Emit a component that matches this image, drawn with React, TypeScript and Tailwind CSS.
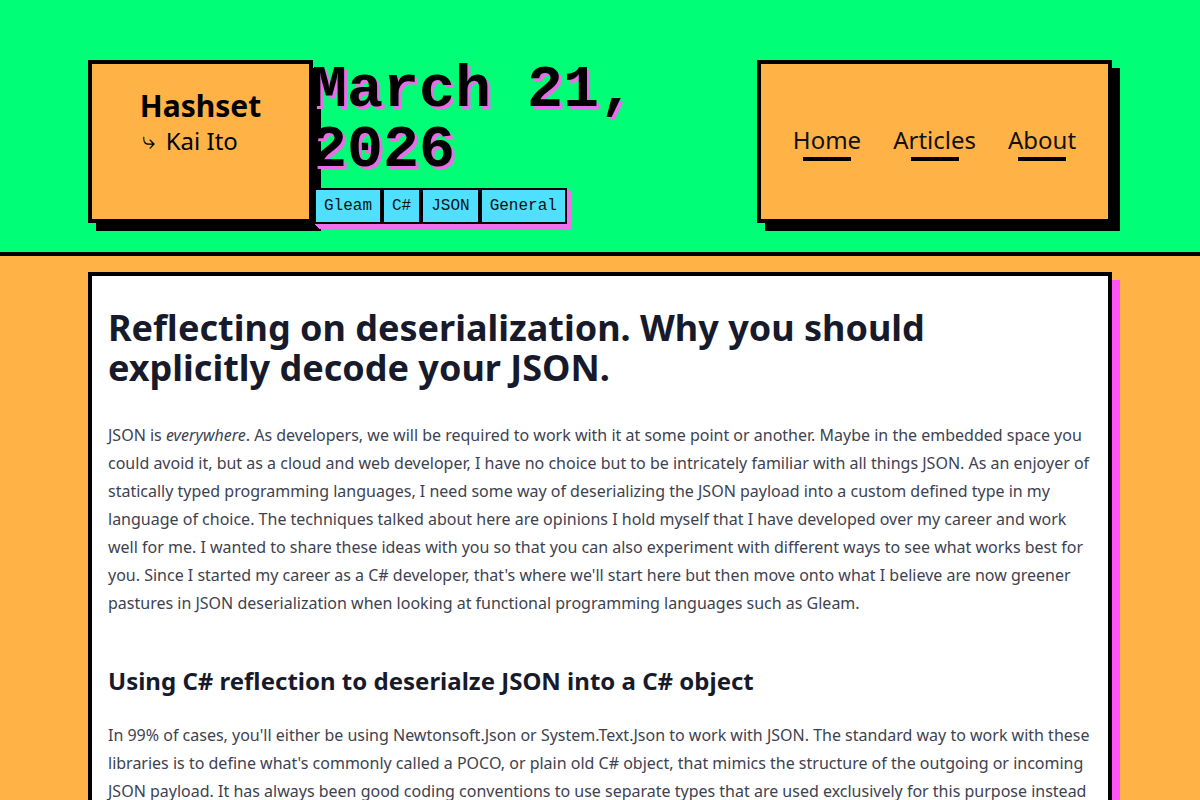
import React from "react";

const tags = ["Gleam", "C#", "JSON", "General"];
const nav = ["Home", "Articles", "About"];

export default function App() {
  return (
    <div className="min-h-screen bg-[#ffb347] font-['Noto_Sans',sans-serif]">
      {/* Header band */}
      <header className="h-[256px] bg-[#00ff77] border-b-4 border-black pt-[60px]">
        <div className="mx-auto w-[1024px] flex items-start">
          {/* Site badge */}
          <div className="w-[225px] h-[163px] shrink-0 bg-[#ffb347] border-4 border-black shadow-[8px_8px_0_#000] flex justify-center pt-[22px]">
            <div className="text-black">
              <div className="text-[30px] font-bold leading-[40px]">Hashset</div>
              <div className="text-[24px] leading-[30px] flex items-center gap-[8px] pl-[2px]">
                <span className="w-[16px] text-[24px] leading-[30px] font-['DejaVu_Sans',sans-serif]">⤷</span>
                <span>Kai Ito</span>
              </div>
            </div>
          </div>

          {/* Post date and tags */}
          <div className="flex-1 flex flex-col">
            <div className="-ml-[2px] font-['Liberation_Mono',monospace] font-bold text-[60px] leading-[60px] text-black [text-shadow:3px_3px_0_#e86de8] relative z-10">
              March 21,
              <br />
              2026
            </div>
            <div className="mt-[8px] flex self-start ml-[1px] shadow-[1px_1px_0_#ee70ee,2px_2px_0_#ee70ee,3px_3px_0_#ee70ee,4px_4px_0_#ee70ee,5px_5px_0_#ee70ee]">
              {tags.map((t) => (
                <span
                  key={t}
                  className="border-2 border-black bg-[#4fdfff] px-[8px] py-[4px] font-['Liberation_Mono',monospace] text-[16px] leading-[24px] text-[#111]"
                >
                  {t}
                </span>
              ))}
            </div>
          </div>

          {/* Navigation */}
          <nav className="w-[355px] h-[163px] shrink-0 bg-[#ffb347] border-4 border-black shadow-[8px_8px_0_#000] flex items-center justify-center gap-[32px]">
            {nav.map((n) => (
              <a key={n} className="flex flex-col items-center text-[24px] leading-[32px] text-[#111] pt-[2px]">
                <span>{n}</span>
                <span className="mt-[1px] block w-[48px] h-[4px] bg-black" />
              </a>
            ))}
          </nav>
        </div>
      </header>

      {/* Article */}
      <main className="pt-[16px]">
        <article className="mx-auto w-[1024px] bg-white border-4 border-black shadow-[8px_8px_0_#ff55f5] px-[16px] pt-[32px] pb-[40px]">
          <h1 className="text-[36px] leading-[40px] font-bold text-[#171a2b]">
            Reflecting on deserialization. Why you should explicitly decode your JSON.
          </h1>
          <p className="mt-[33px] text-[16px] leading-[28px] text-[#3d4250]">
            JSON is <em>everywhere</em>. As developers, we will be required to work with it at some point or another.
            Maybe in the embedded space you could avoid it, but as a cloud and web developer, I have no choice but to be
            intricately familiar with all things JSON. As an enjoyer of statically typed programming languages, I need
            some way of deserializing the JSON payload into a custom defined type in my language of choice. The
            techniques talked about here are opinions I hold myself that I have developed over my career and work well
            for me. I wanted to share these ideas with you so that you can also experiment with different ways to see
            what works best for you. Since I started my career as a C# developer, that's where we'll start here but then
            move onto what I believe are now greener pastures in JSON deserialization when looking at functional
            programming languages such as Gleam.
          </p>
          <h2 className="mt-[48px] text-[24px] leading-[32px] font-bold text-[#171a2b]">
            Using C# reflection to deserialze JSON into a C# object
          </h2>
          <p className="mt-[24px] text-[16px] leading-[28px] text-[#3d4250]">
            In 99% of cases, you'll either be using Newtonsoft.Json or System.Text.Json to work with JSON. The standard
            way to work with these libraries is to define what's commonly called a POCO, or plain old C# object, that
            mimics the structure of the outgoing or incoming JSON payload. It has always been good coding conventions to
            use separate types that are used exclusively for this purpose instead of reusing your domain models, so that
            the shape of your data on the wire can change independently of the rest of your application.
          </p>
        </article>
      </main>
    </div>
  );
}
